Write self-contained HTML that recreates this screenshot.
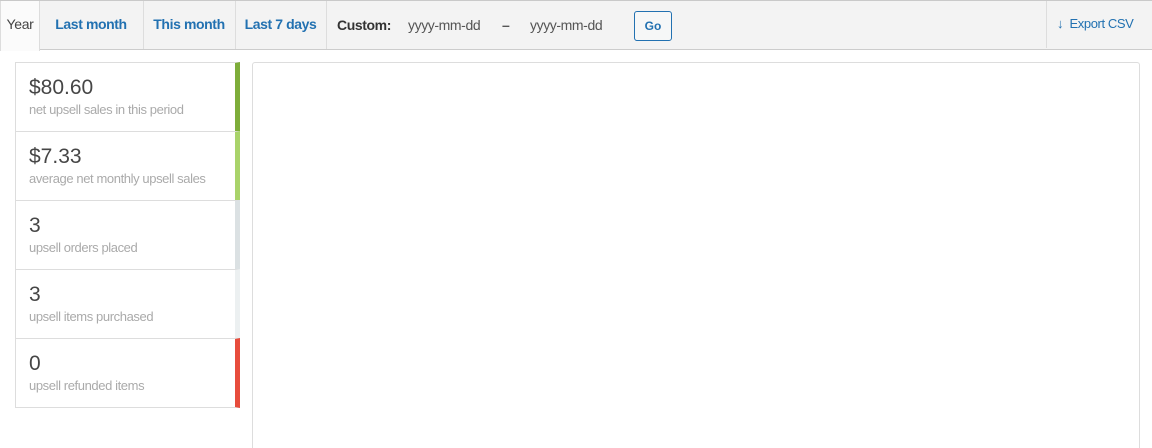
<!DOCTYPE html>
<html style="height:448px;overflow:hidden"><head><style>
body{margin:0;width:1152px;height:448px;background:#fff;font-family:"Liberation Sans",sans-serif;overflow:hidden;position:relative}
.bar{position:absolute;left:0;top:0;width:1152px;height:50px;background:#f3f3f3;border-top:1px solid #c9c9c9;border-bottom:1px solid #ccc;box-sizing:border-box}
.t{position:absolute;top:0;height:48px;line-height:46px;font-size:14px;letter-spacing:-0.4px;color:#2271b1;font-weight:bold;border-right:1px solid #ddd;text-align:center}
.yr{position:absolute;left:0;top:0;width:38px;height:50px;background:#fbfbfb;border-left:1px solid #ddd;border-right:1px solid #ddd;line-height:46px;font-size:14px;letter-spacing:-0.3px;color:#444;text-align:center;z-index:2}
.lbl{position:absolute;top:0;line-height:48px;font-size:14px;letter-spacing:-0.4px;color:#333}
.go{position:absolute;left:634px;top:10px;width:38px;height:30px;border:1px solid #2271b1;border-radius:3px;box-sizing:border-box;background:#f6f7f7;color:#2271b1;font-size:12px;font-weight:bold;text-align:center;line-height:28px}
.stat{position:absolute;left:15px;width:225px;height:70px;border:1px solid #ddd;box-sizing:border-box;border-right:5px solid}
.stat b{position:absolute;left:13px;top:13px;font-weight:normal;font-size:21px;color:#464646}
.stat span{position:absolute;left:13px;top:39px;font-size:13px;letter-spacing:-0.4px;color:#aaa}
.chart{position:absolute;left:252px;top:62px;width:888px;height:386px;border:1px solid #ddd;border-bottom:none;border-radius:3px 3px 0 0;box-sizing:border-box}
</style></head><body>
<div class="bar">
<div class="yr">Year</div>
<div class="t" style="left:39px;width:104px">Last month</div>
<div class="t" style="left:143px;width:92px">This month</div>
<div class="t" style="left:235px;width:91px">Last 7 days</div>
<div class="lbl" style="left:337px;font-weight:bold">Custom:</div>
<div class="lbl" style="left:408px;color:#555">yyyy-mm-dd</div>
<div class="lbl" style="left:502px;color:#555;font-weight:bold">–</div>
<div class="lbl" style="left:530px;color:#555">yyyy-mm-dd</div>
<div class="go">Go</div>
<div style="position:absolute;left:1046px;top:0;height:47px;border-left:1px solid #ddd"></div>
<div class="lbl" style="left:1057px;color:#2271b1;font-size:13px;line-height:46px">↓ &nbsp;Export CSV</div>
</div>
<div class="stat" style="top:62px;border-right-color:#7ead3a"><b>$80.60</b><span>net upsell sales in this period</span></div>
<div class="stat" style="top:131px;border-right-color:#a9d36a"><b>$7.33</b><span>average net monthly upsell sales</span></div>
<div class="stat" style="top:200px;border-right-color:#dbe1e3"><b>3</b><span>upsell orders placed</span></div>
<div class="stat" style="top:269px;border-right-color:#ecf0f1"><b>3</b><span>upsell items purchased</span></div>
<div class="stat" style="top:338px;border-right-color:#e74c3c"><b>0</b><span>upsell refunded items</span></div>
<div class="chart"></div>
</body></html>
